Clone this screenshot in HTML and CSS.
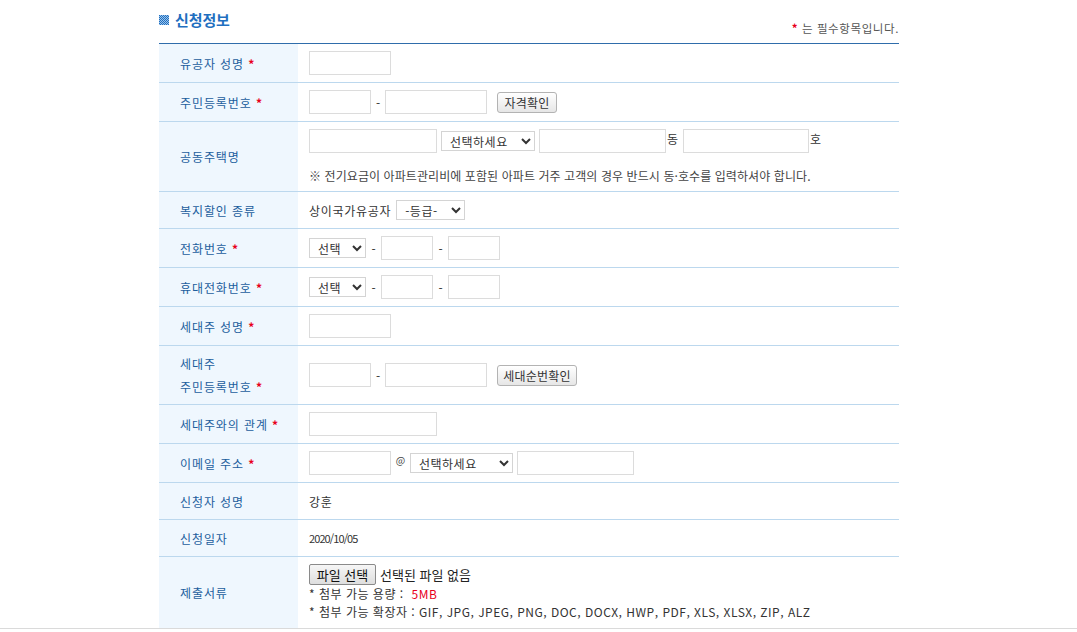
FILE: index.html
```html
<!DOCTYPE html>
<html lang="ko">
<head>
<meta charset="utf-8">
<title>신청정보</title>
<link rel="stylesheet" href="styles.css">
</head>
<body>
<div class="wrap">
  <div class="head">
    <h2 class="title">
      <svg class="title-icon" width="10" height="10" viewBox="0 0 10 10">
        <defs>
          <pattern id="chk" width="2" height="2" patternUnits="userSpaceOnUse">
            <rect x="0" y="0" width="1" height="1" fill="#1f6fc0"/>
            <rect x="1" y="1" width="1" height="1" fill="#1f6fc0"/>
            <rect x="1" y="0" width="1" height="1" fill="#9cc3ea"/>
            <rect x="0" y="1" width="1" height="1" fill="#9cc3ea"/>
          </pattern>
        </defs>
        <rect x="0" y="0" width="10" height="10" fill="url(#chk)"/>
      </svg>
      신청정보
    </h2>
    <p class="req-note"><span class="star">*</span> 는 필수항목입니다.</p>
  </div>

  <table class="form">
    <tr class="h39">
      <th>유공자 성명 <span class="star">*</span></th>
      <td><input class="in w82" type="text"></td>
    </tr>
    <tr class="h39">
      <th>주민등록번호 <span class="star">*</span></th>
      <td>
        <div class="line">
          <input class="in w62" type="text"><span class="dash">-</span><input class="in w102" type="text">
          <button class="btn w60" type="button">자격확인</button>
        </div>
      </td>
    </tr>
    <tr class="h70">
      <th>공동주택명</th>
      <td class="top">
        <div class="line">
          <input class="in w128" type="text">
          <select class="sel w94 ml4"><option>선택하세요</option></select>
          <input class="in w127 ml4" type="text"><span class="unit">동</span><input class="in w126 ml4" type="text"><span class="unit">호</span>
        </div>
        <p class="note">※ 전기요금이 아파트관리비에 포함된 아파트 거주 고객의 경우 반드시 동·호수를 입력하셔야 합니다.</p>
      </td>
    </tr>
    <tr class="h37">
      <th>복지할인 종류</th>
      <td>
        <div class="line">
          <span class="txt">상이국가유공자</span>
          <select class="sel w69 ml5"><option>-등급-</option></select>
        </div>
      </td>
    </tr>
    <tr class="h39">
      <th>전화번호 <span class="star">*</span></th>
      <td>
        <div class="line">
          <select class="sel w57"><option>선택</option></select><span class="dash2">-</span><input class="in w52" type="text"><span class="dash2">-</span><input class="in w52" type="text">
        </div>
      </td>
    </tr>
    <tr class="h39">
      <th>휴대전화번호 <span class="star">*</span></th>
      <td>
        <div class="line">
          <select class="sel w57"><option>선택</option></select><span class="dash2">-</span><input class="in w52" type="text"><span class="dash2">-</span><input class="in w52" type="text">
        </div>
      </td>
    </tr>
    <tr class="h39">
      <th>세대주 성명 <span class="star">*</span></th>
      <td><input class="in w82" type="text"></td>
    </tr>
    <tr class="h59">
      <th class="two">세대주<br>주민등록번호 <span class="star">*</span></th>
      <td>
        <div class="line">
          <input class="in w62" type="text"><span class="dash">-</span><input class="in w102" type="text">
          <button class="btn w80" type="button">세대순번확인</button>
        </div>
      </td>
    </tr>
    <tr class="h39">
      <th>세대주와의 관계 <span class="star">*</span></th>
      <td><input class="in w128" type="text"></td>
    </tr>
    <tr class="h39">
      <th>이메일 주소 <span class="star">*</span></th>
      <td>
        <div class="line">
          <input class="in w82" type="text"><span class="at">@</span><select class="sel w103"><option>선택하세요</option></select><input class="in w117 ml4" type="text">
        </div>
      </td>
    </tr>
    <tr class="h37">
      <th>신청자 성명</th>
      <td class="txt">강훈</td>
    </tr>
    <tr class="h37">
      <th>신청일자</th>
      <td class="date">2020/10/05</td>
    </tr>
    <tr class="h71 last">
      <th>제출서류</th>
      <td class="top files">
        <div class="line">
          <button class="file-btn" type="button">파일 선택</button><span class="file-none">선택된 파일 없음</span>
        </div>
        <p class="info">* 첨부 가능 용량 : <span class="red">5MB</span></p>
        <p class="info">* 첨부 가능 확장자 : GIF, JPG, JPEG, PNG, DOC, DOCX, HWP, PDF, XLS, XLSX, ZIP, ALZ</p>
      </td>
    </tr>
  </table>
</div>
<div class="page-rule"></div>
</body>
</html>
```

FILE: styles.css
```css
html, body {
  margin: 0;
  padding: 0;
  background: #fff;
}
body {
  font-family: "Noto Sans CJK KR", "Noto Sans", sans-serif;
  font-size: 12px;
  color: #333;
}
.wrap {
  width: 740px;
  margin-left: 159px;
}
.head {
  height: 43px;
  display: flex;
  justify-content: space-between;
  align-items: flex-start;
}
.title {
  margin: 9px 0 0 0;
  display: flex;
  align-items: center;
  gap: 6px;
  font-size: 15px;
  font-weight: bold;
  color: #1f6fc0;
  line-height: 22px;
  letter-spacing: -0.1px;
}
.title-icon {
  display: block;
}
.req-note {
  margin: 19px 0 0 0;
  font-size: 11.5px;
  line-height: 18px;
  color: #555;
  letter-spacing: 0.6px;
}
.star {
  color: #e8001c;
  font-weight: bold;
}
.form {
  width: 740px;
  border-collapse: collapse;
  border-top: 1px solid #2f6dab;
}
.form th,
.form td {
  border-bottom: 1px solid #bcd8ee;
  padding: 0;
  vertical-align: middle;
}
.form th {
  width: 118px;
  padding-left: 21px;
  background: #eff7fe;
  text-align: left;
  font-weight: normal;
  color: #1c5e9d;
  font-size: 12px;
  letter-spacing: 0.9px;
}
.form th.two {
  line-height: 23px;
}
.form td {
  padding-left: 11px;
  color: #333;
}
.form td.top {
  vertical-align: top;
  padding-top: 7px;
}
.form tr.last th,
.form tr.last td {
  border-bottom: none;
}
.h37 { height: 37px; }
.h39 { height: 39px; }
.h59 { height: 59px; }
.h70 { height: 70px; }
.h71 { height: 71px; }

.txt {
  letter-spacing: 0.7px;
}
.line {
  display: flex;
  align-items: center;
}
.in {
  box-sizing: border-box;
  height: 24px;
  border: 1px solid #dcdcdc;
  margin: 0;
  padding: 0 4px;
  background: #fff;
  font-family: inherit;
  font-size: 12px;
}
.sel {
  box-sizing: border-box;
  height: 20px;
  border: 1px solid #d4d4d4;
  border-radius: 0;
  margin: 0;
  padding: 0 0 0 4px;
  background: #fff;
  font-family: inherit;
  font-size: 12px;
  color: #333;
  letter-spacing: 0.5px;
}
.w52 { width: 52px; }
.w57 { width: 57px; }
.w60 { width: 60px; }
.w62 { width: 62px; }
.w69 { width: 69px; }
.w80 { width: 80px; }
.w82 { width: 82px; }
.w94 { width: 94px; }
.w102 { width: 102px; }
.w103 { width: 103px; }
.w117 { width: 117px; }
.w126 { width: 126px; }
.w127 { width: 127px; }
.w128 { width: 128px; }
.ml4 { margin-left: 4px; }
.ml5 { margin-left: 5px; }

.dash {
  width: 14px;
  text-align: center;
  color: #333;
}
.dash2 {
  width: 15px;
  text-align: center;
  color: #333;
}
.unit {
  margin-left: 1px;
  margin-right: 1px;
  align-self: flex-start;
  line-height: 20px;
  color: #333;
}
.at {
  width: 19px;
  text-align: center;
  font-size: 10px;
  color: #444;
  align-self: flex-start;
  line-height: 18px;
}
.btn {
  box-sizing: border-box;
  height: 21px;
  margin-left: 10px;
  padding: 0;
  border: 1px solid #b3b3b3;
  border-radius: 3px;
  background: linear-gradient(#ffffff, #e6e6e6);
  font-family: inherit;
  font-size: 12px;
  color: #333;
  letter-spacing: 0.2px;
}
.note {
  margin: 16px 0 0 0;
  font-size: 12px;
  line-height: 14px;
  color: #444;
  letter-spacing: 0.08px;
}
.date {
  font-size: 11px;
  letter-spacing: -0.9px;
}
.files {
  padding-top: 7px;
}
.file-btn {
  box-sizing: border-box;
  height: 21px;
  width: 67px;
  margin: 0;
  padding: 0;
  border: 1px solid #8a8a8a;
  border-radius: 2px;
  background: linear-gradient(#f6f6f6, #dedede);
  font-family: inherit;
  font-size: 13px;
  color: #111;
}
.file-none {
  margin-left: 4px;
  font-size: 13px;
  color: #222;
  letter-spacing: 0;
}
.info {
  margin: 0;
  font-size: 12px;
  line-height: 18px;
  color: #333;
  letter-spacing: 0.5px;
}
.red {
  color: #e8001c;
  margin-left: 4px;
}
.page-rule {
  border-top: 1px solid #dadada;
  height: 4px;
}
```
